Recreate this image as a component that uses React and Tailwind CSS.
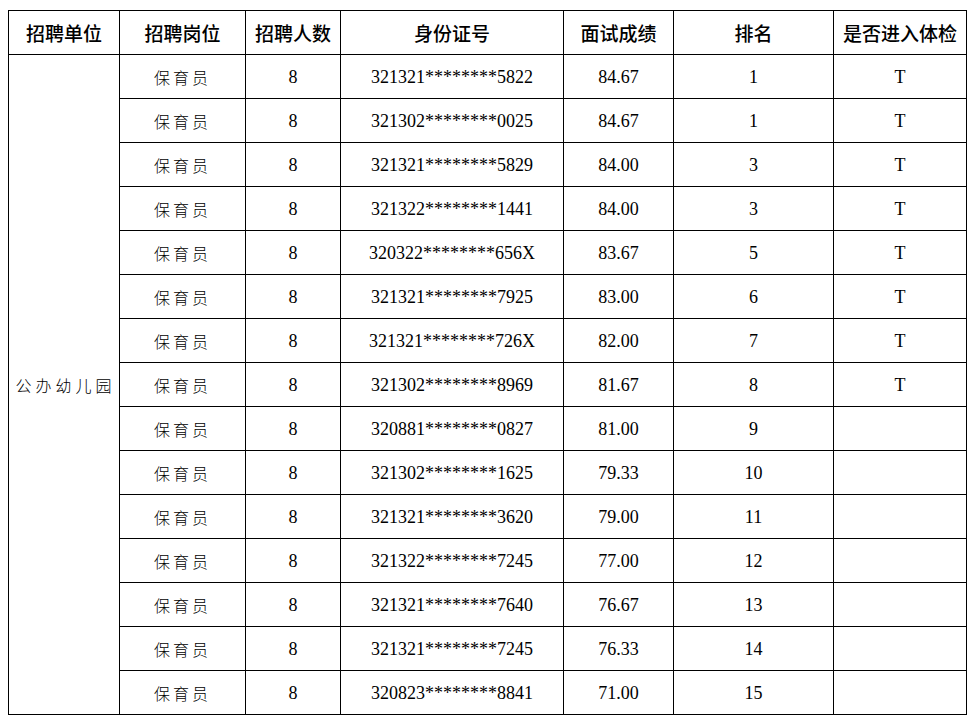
const rows = [
  ['321321********5822', '84.67', '1', 'T'],
  ['321302********0025', '84.67', '1', 'T'],
  ['321321********5829', '84.00', '3', 'T'],
  ['321322********1441', '84.00', '3', 'T'],
  ['320322********656X', '83.67', '5', 'T'],
  ['321321********7925', '83.00', '6', 'T'],
  ['321321********726X', '82.00', '7', 'T'],
  ['321302********8969', '81.67', '8', 'T'],
  ['320881********0827', '81.00', '9', ''],
  ['321302********1625', '79.33', '10', ''],
  ['321321********3620', '79.00', '11', ''],
  ['321322********7245', '77.00', '12', ''],
  ['321321********7640', '76.67', '13', ''],
  ['321321********7245', '76.33', '14', ''],
  ['320823********8841', '71.00', '15', ''],
];

const headers = ['招聘单位', '招聘岗位', '招聘人数', '身份证号', '面试成绩', '排名', '是否进入体检'];
const widths = ['w-[111px]', 'w-[126px]', 'w-[95px]', 'w-[223px]', 'w-[110px]', 'w-[160px]', 'w-[133px]'];

const cjk = "font-['Noto_Sans_CJK_SC',sans-serif]";
const serif = "font-['Liberation_Serif','Times_New_Roman',serif] text-[18px] pt-[2px]";
const cell = 'border border-black p-0 text-center align-middle';

export default function App() {
  return (
    <div className="min-h-screen bg-white pl-[8px] pt-[10px] text-black">
      <table className="w-[958px] table-fixed border-collapse">
        <colgroup>
          {widths.map((w, i) => (
            <col key={i} className={w} />
          ))}
        </colgroup>
        <thead>
          <tr className="h-[44px]">
            {headers.map((h) => (
              <th key={h} className={`${cell} ${cjk} text-[19px] font-medium leading-none`}>
                {h}
              </th>
            ))}
          </tr>
        </thead>
        <tbody>
          {rows.map(([id, score, rank, pass], i) => (
            <tr key={i} className="h-[44px]">
              {i === 0 && (
                <td rowSpan={rows.length} className={`${cell} ${cjk} text-[16px] font-light tracking-[4px] pl-[3px]`}>
                  公办幼儿园
                </td>
              )}
              <td className={`${cell} ${cjk} text-[16px] font-light tracking-[3px]`}>保育员</td>
              <td className={`${cell} ${serif}`}>8</td>
              <td className={`${cell} ${serif}`}>{id}</td>
              <td className={`${cell} ${serif}`}>{score}</td>
              <td className={`${cell} ${serif}`}>{rank}</td>
              <td className={`${cell} ${serif}`}>{pass}</td>
            </tr>
          ))}
        </tbody>
      </table>
    </div>
  );
}
